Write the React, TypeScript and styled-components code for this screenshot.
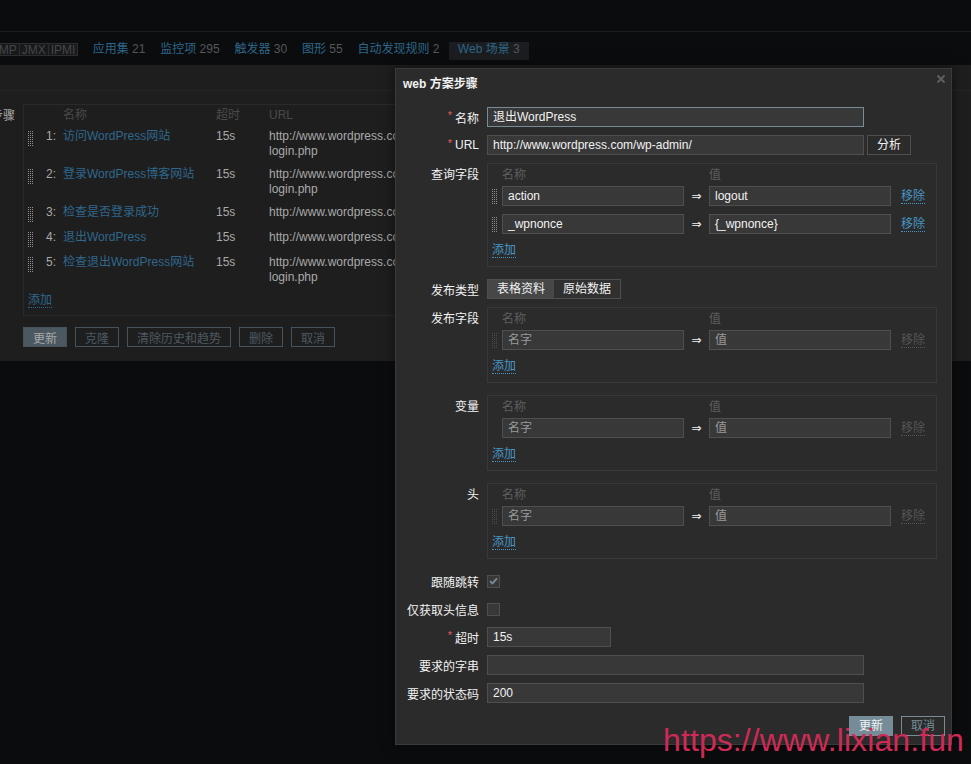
import React from "react";
import styled, { createGlobalStyle, css } from "styled-components";

const GlobalStyle = createGlobalStyle`
  html, body { margin: 0; padding: 0; background: #0b0c0e; }
  body {
    font-family: "Liberation Sans", Arial, "Noto Sans CJK SC", sans-serif;
    font-size: 12px;
    color: #f2f2f2;
  }
  * { box-sizing: border-box; }
`;

const Page = styled.div`
  position: relative;
  width: 971px;
  height: 764px;
  overflow: hidden;
  background: #0b0c0e;
`;

const TopBar = styled.div`
  height: 32px;
  border-bottom: 1px solid #1d1e21;
`;

const Nav = styled.div`
  height: 33px;
  display: flex;
  align-items: flex-start;
  padding-top: 10px;
  white-space: nowrap;
`;

const AvailGroup = styled.div`
  display: flex;
  margin-left: -20px;
  margin-right: 7px;
  margin-top: 1px;
`;

const AvailTag = styled.span`
  display: block;
  padding: 0 2px;
  height: 13px;
  line-height: 12px;
  border: 1px solid #2c2d2f;
  margin-left: -1px;
  background: #18191b;
  color: #45474a;
`;

const NavItem = styled.div<{ $active?: boolean }>`
  padding: 0 7.4px;
  height: 14px;
  line-height: 14px;
  color: #2e6688;
  ${(p) =>
    p.$active &&
    css`
      margin-left: 2px;
      padding: 0 9px;
      height: 18px;
      background: #1b1d20;
    `}
`;

const Count = styled.span`
  color: #555759;
`;

const Panel = styled.div`
  height: 296px;
  background: #1e1e1e;
`;

const TabStrip = styled.div`
  height: 26px;
  border-bottom: 1px solid #252525;
`;

const BgForm = styled.div`
  display: grid;
  grid-template-columns: 15px 700px;
  column-gap: 8px;
  row-gap: 11px;
  padding-top: 13px;
`;

const BgLabel = styled.div`
  display: flex;
  justify-content: flex-end;
  align-items: center;
  height: 20px;
  white-space: nowrap;
  color: #a9a9a9;
`;

const StepsBox = styled.div`
  border: 1px solid #2a2a2a;
  padding: 2px 0 7px 4px;
`;

const StepsRow = styled.div<{ $head?: boolean }>`
  display: grid;
  grid-template-columns: 6px 29px 153px 53px 260px;
  line-height: 15px;
  padding: ${(p) => (p.$head ? "1px 0 2px" : "4px 0")};
  color: ${(p) => (p.$head ? "#4a4a4a" : "#a9a9a9")};
`;

const Handle = styled.span<{ $dim?: boolean; $h?: number }>`
  display: block;
  width: 6px;
  height: ${(p) => p.$h ?? 16}px;
  margin-top: 2px;
  background-image: radial-gradient(circle at 0.5px 0.5px, ${(p) =>
    p.$dim ? "#4a4a4a" : "#8d8d8d"} 0.8px, transparent 0.9px);
  background-size: 2px 2px;
`;

const StepNum = styled.span`
  text-align: right;
  padding-right: 7px;
`;

const BgLink = styled.span`
  color: #2f678d;
`;

const BgAdd = styled.span`
  display: inline-block;
  margin-top: 4px;
  line-height: 14px;
  color: #2f678d;
  border-bottom: 1px dotted #2f678d;
`;

const BgButtons = styled.div`
  display: flex;
  gap: 8px;
`;

const BgButton = styled.button<{ $primary?: boolean }>`
  height: 20px;
  padding: 0 9px;
  font: inherit;
  border: 1px solid #46535c;
  background: ${(p) => (p.$primary ? "#4b5861" : "transparent")};
  color: ${(p) => (p.$primary ? "#a9a9a9" : "#4c5962")};
`;

/* ---------- Modal ---------- */

const Modal = styled.div`
  position: absolute;
  left: 395px;
  top: 68px;
  width: 557px;
  height: 677px;
  background: #2b2b2b;
  border: 1px solid #3a3a3a;
  box-shadow: 0 0 12px rgba(0, 0, 0, 0.5);
`;

const ModalHeader = styled.div`
  height: 30px;
  padding: 7px 7px 0;
  line-height: 16px;
  font-weight: bold;
  color: #f2f2f2;
`;

const CloseBtn = styled.span`
  position: absolute;
  top: 4px;
  right: 5px;
  width: 10px;
  height: 10px;
  display: block;
`;

const FormGrid = styled.div`
  display: grid;
  grid-template-columns: 74px 450px;
  column-gap: 8px;
  row-gap: 8px;
  padding: 8px 0 0 9px;
  align-items: start;
`;

const Label = styled.div`
  height: 20px;
  display: flex;
  align-items: center;
  justify-content: flex-end;
  white-space: nowrap;
  color: #f2f2f2;
`;

const Req = styled.span`
  display: inline-block;
  color: #e45959;
  margin-right: 3px;
  font-size: 11px;
  line-height: 10px;
  height: 10px;
  position: relative;
  top: -2px;
`;

const Field = styled.div`
  display: flex;
  align-items: center;
  height: 20px;
`;

const Input = styled.div<{ $w?: number; $focus?: boolean; $ph?: boolean }>`
  width: ${(p) => p.$w ?? 377}px;
  height: 20px;
  line-height: 18px;
  padding: 0 5px;
  background: #383838;
  border: 1px solid ${(p) => (p.$focus ? "#768d99" : "#4f4f4f")};
  color: ${(p) => (p.$ph ? "#9a9a9a" : "#f2f2f2")};
  white-space: nowrap;
  overflow: hidden;
`;

const Btn = styled.button<{ $kind?: "plain" | "primary" | "alt" }>`
  height: 20px;
  padding: 0 9px;
  font: inherit;
  line-height: 18px;
  cursor: pointer;
  ${(p) =>
    p.$kind === "primary"
      ? css`
          background: #768d99;
          border: 1px solid #768d99;
          color: #f2f2f2;
        `
      : p.$kind === "alt"
      ? css`
          background: transparent;
          border: 1px solid #768d99;
          color: #768d99;
        `
      : css`
          background: #2b2b2b;
          border: 1px solid #4f4f4f;
          color: #f2f2f2;
        `}
`;

const AnalyzeBtn = styled(Btn)`
  margin-left: 3px;
`;

const PairBox = styled.div`
  width: 450px;
  border: 1px solid #383838;
  padding: 4px 0 8px 4px;
  margin-bottom: 4px;
`;

const PairGrid = styled.div`
  display: grid;
  grid-template-columns: 10px 182px 25px 182px auto;
  row-gap: 8px;
  align-items: center;
`;

const PairHead = styled.div`
  height: 14px;
  line-height: 14px;
  color: #5e5e5e;
  margin-bottom: -4px;
  overflow: visible;
`;

const HandleCell = styled.div`
  height: 20px;
  display: flex;
  align-items: center;
`;

const Arrow = styled.div`
  text-align: center;
  height: 20px;
  line-height: 20px;
  font-family: "DejaVu Sans", sans-serif;
  font-size: 12px;
  color: #f2f2f2;
`;

const LinkText = styled.span<{ $disabled?: boolean }>`
  display: inline-block;
  height: 15px;
  line-height: 14px;
  color: ${(p) => (p.$disabled ? "#555555" : "#4796c4")};
  border-bottom: 1px dotted ${(p) => (p.$disabled ? "#555555" : "#4796c4")};
`;

const RemoveCell = styled.div`
  padding-left: 10px;
  height: 20px;
  display: flex;
  align-items: center;
`;

const AddRow = styled.div`
  margin-top: 8px;
  height: 16px;
  display: flex;
  align-items: center;
`;

const Segmented = styled.div`
  display: flex;
  border: 1px solid #4f4f4f;
  width: max-content;
  height: 20px;
`;

const Segment = styled.div<{ $on?: boolean }>`
  height: 18px;
  line-height: 18px;
  padding: 0 9px;
  background: ${(p) => (p.$on ? "#474747" : "#303030")};
  color: #f2f2f2;
`;

const Check = styled.div`
  width: 13px;
  height: 13px;
  background: #383838;
  border: 1px solid #4f4f4f;
  display: flex;
  align-items: center;
  justify-content: center;
`;

const Footer = styled.div`
  display: flex;
  justify-content: flex-end;
  gap: 8px;
  padding: 13px 6px 0 0;
`;

const Watermark = styled.div`
  position: absolute;
  left: 663px;
  top: 721px;
  font-family: "Liberation Sans", Arial, sans-serif;
  font-size: 32px;
  letter-spacing: 0.1px;
  line-height: 38px;
  color: #cf2a56;
  white-space: nowrap;
  pointer-events: none;
`;

type Pair = { name: string; value: string; ph?: boolean; handle?: boolean; disabled?: boolean };

const PairTable: React.FC<{ rows: Pair[] }> = ({ rows }) => (
  <PairBox>
    <PairGrid>
      <span />
      <PairHead>名称</PairHead>
      <span />
      <PairHead>值</PairHead>
      <span />
      {rows.map((r, i) => (
        <React.Fragment key={i}>
          <HandleCell>{r.handle ? <Handle $dim={r.disabled} $h={16} /> : null}</HandleCell>
          <Input $w={182} $ph={r.ph}>
            {r.name}
          </Input>
          <Arrow>⇒</Arrow>
          <Input $w={182} $ph={r.ph}>
            {r.value}
          </Input>
          <RemoveCell>
            <LinkText $disabled={r.disabled}>移除</LinkText>
          </RemoveCell>
        </React.Fragment>
      ))}
    </PairGrid>
    <AddRow>
      <LinkText>添加</LinkText>
    </AddRow>
  </PairBox>
);

const steps = [
  { n: "1:", name: "访问WordPress网站", url: ["http://www.wordpress.com/wp-", "login.php"] },
  { n: "2:", name: "登录WordPress博客网站", url: ["http://www.wordpress.com/wp-", "login.php"] },
  { n: "3:", name: "检查是否登录成功", url: ["http://www.wordpress.com/wp-admin/"] },
  { n: "4:", name: "退出WordPress", url: ["http://www.wordpress.com/wp-admin/"] },
  { n: "5:", name: "检查退出WordPress网站", url: ["http://www.wordpress.com/wp-", "login.php"] },
];

const navItems = [
  { t: "应用集", c: "21" },
  { t: "监控项", c: "295" },
  { t: "触发器", c: "30" },
  { t: "图形", c: "55" },
  { t: "自动发现规则", c: "2" },
];

export default function App() {
  return (
    <Page>
      <GlobalStyle />
      <TopBar />
      <Nav>
        <AvailGroup>
          <AvailTag>SNMP</AvailTag>
          <AvailTag>JMX</AvailTag>
          <AvailTag>IPMI</AvailTag>
        </AvailGroup>
        {navItems.map((n) => (
          <NavItem key={n.t}>
            {n.t} <Count>{n.c}</Count>
          </NavItem>
        ))}
        <NavItem $active>
          Web 场景 <Count>3</Count>
        </NavItem>
      </Nav>
      <Panel>
        <TabStrip />
        <BgForm>
          <BgLabel>步骤</BgLabel>
          <StepsBox>
            <StepsRow $head>
              <span />
              <span />
              <span>名称</span>
              <span>超时</span>
              <span>URL</span>
            </StepsRow>
            {steps.map((s) => (
              <StepsRow key={s.n}>
                <Handle $dim={false} $h={15} />
                <StepNum>{s.n}</StepNum>
                <BgLink>{s.name}</BgLink>
                <span>15s</span>
                <span>
                  {s.url.map((u, i) => (
                    <React.Fragment key={i}>
                      {i > 0 && <br />}
                      {u}
                    </React.Fragment>
                  ))}
                </span>
              </StepsRow>
            ))}
            <BgAdd>添加</BgAdd>
          </StepsBox>
          <span />
          <BgButtons>
            <BgButton $primary>更新</BgButton>
            <BgButton>克隆</BgButton>
            <BgButton>清除历史和趋势</BgButton>
            <BgButton>删除</BgButton>
            <BgButton>取消</BgButton>
          </BgButtons>
        </BgForm>
      </Panel>

      <Modal>
        <ModalHeader>web 方案步骤</ModalHeader>
        <CloseBtn>
          <svg width="10" height="10" viewBox="0 0 10 10">
            <path d="M1.5 1.5 L8.5 8.5 M8.5 1.5 L1.5 8.5" stroke="#5f5f5f" strokeWidth="2" />
          </svg>
        </CloseBtn>
        <FormGrid>
          <Label>
            <Req>*</Req>名称
          </Label>
          <Field>
            <Input $focus>退出WordPress</Input>
          </Field>

          <Label>
            <Req>*</Req>URL
          </Label>
          <Field>
            <Input>http://www.wordpress.com/wp-admin/</Input>
            <AnalyzeBtn>分析</AnalyzeBtn>
          </Field>

          <Label>查询字段</Label>
          <PairTable
            rows={[
              { name: "action", value: "logout", handle: true },
              { name: "_wpnonce", value: "{_wpnonce}", handle: true },
            ]}
          />

          <Label>发布类型</Label>
          <Segmented>
            <Segment $on>表格资料</Segment>
            <Segment>原始数据</Segment>
          </Segmented>

          <Label>发布字段</Label>
          <PairTable rows={[{ name: "名字", value: "值", ph: true, handle: true, disabled: true }]} />

          <Label>变量</Label>
          <PairTable rows={[{ name: "名字", value: "值", ph: true, handle: false, disabled: true }]} />

          <Label>头</Label>
          <PairTable rows={[{ name: "名字", value: "值", ph: true, handle: true, disabled: true }]} />

          <Label>跟随跳转</Label>
          <Field>
            <Check>
              <svg width="9" height="8" viewBox="0 0 9 8">
                <path d="M1 4.2 L3.4 6.4 L8 1.4" stroke="#768d99" strokeWidth="1.8" fill="none" />
              </svg>
            </Check>
          </Field>

          <Label>仅获取头信息</Label>
          <Field>
            <Check />
          </Field>

          <Label>
            <Req>*</Req>超时
          </Label>
          <Field>
            <Input $w={124}>15s</Input>
          </Field>

          <Label>要求的字串</Label>
          <Field>
            <Input />
          </Field>

          <Label>要求的状态码</Label>
          <Field>
            <Input>200</Input>
          </Field>
        </FormGrid>
        <Footer>
          <Btn $kind="primary">更新</Btn>
          <Btn $kind="alt">取消</Btn>
        </Footer>
      </Modal>
      <Watermark>https://www.lixian.fun</Watermark>
    </Page>
  );
}
